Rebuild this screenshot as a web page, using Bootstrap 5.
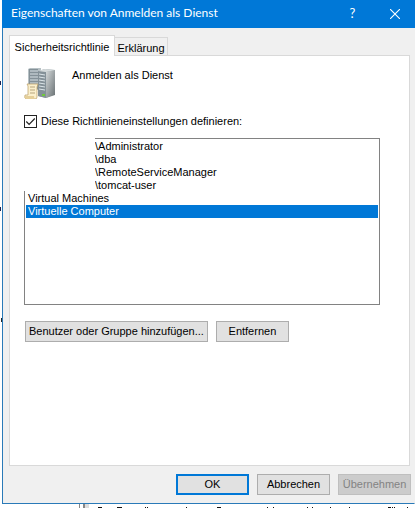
<!DOCTYPE html>
<html lang="de">
<head>
<meta charset="utf-8">
<meta name="viewport" content="width=device-width, initial-scale=1">
<title>Eigenschaften von Anmelden als Dienst</title>
<link href="https://cdn.jsdelivr.net/npm/bootstrap@5.3.0/dist/css/bootstrap.min.css" rel="stylesheet">
<style>
  body { font-family: "Liberation Sans", Arial, sans-serif; font-size: 11px; line-height: 13px; color: #000; background: #fff; }
  .desktop { height: 100vh; padding-left: 2px; padding-right: 1px; }
  .peek { position: absolute; left: 0; width: 1px; height: 4px; background: #1a2250; }
  .peek-a { top: 81px; } .peek-b { top: 207px; } .peek-c { top: 318px; left: 1px; background: #222; }
  .dialog { background: #f0f0f0; border: 1px solid #2a7ab8; border-top: 0; border-right-color: #f0f0f0; height: calc(100vh - 4px); }
  .titlebar { background: #0078d7; color: #fff; height: 28px; padding-left: 9px; font-family: Lato, "Open Sans", sans-serif; margin: 0 -1px; }
  .titlebar h1 { font-size: 12px; line-height: 26px; font-weight: 400; }
  .titlebar button { width: 45px; height: 26px; color: #fff; background: none; border: 0; font-size: 13px; }
  .titlebar button:last-child { width: 40px; }
  .tabs { padding: 7px 4px 0 6px; }
  .tabs .nav-link { border: 1px solid #d9d9d9; border-bottom: 0; border-left: 0; border-radius: 0; color: #000; background: #f0f0f0; width: 53px; padding: 3px 0 0; height: 18px; margin: 0; text-align: center; }
  .tabs .nav-link.active { background: #fff; border-left: 1px solid #d9d9d9; width: 106px; height: 21px; padding: 2px 0 0; margin-bottom: -1px; position: relative; color: #000; }
  .panel { background: #fff; border: 1px solid #d9d9d9; margin: 0 4px 0 6px; padding: 9px 29px 0 14px; }
  .check { width: 13px; height: 13px; border: 1px solid #222; border-radius: 0 !important; margin: 0; }
  .check:checked { background: #fff url("data:image/svg+xml,%3Csvg xmlns='http://www.w3.org/2000/svg' viewBox='0 0 11 11'%3E%3Cpath d='M1.3 5.5l2.8 2.8L9.8 2.5' fill='none' stroke='%23222' stroke-width='1.2'/%3E%3C/svg%3E") center/11px; border-color: #222; }
  .listbox { position: relative; border: 1px solid #828282; height: 167px; padding: 1px; margin-top: 10px; border-radius: 0; }
  .entry { border: 0; background: none; color: #000; text-align: left; padding: 0 2px; line-height: 13px; height: 13px; }
  .entry.member { padding-left: 69px; }
  .entry.chosen { background: #0078d7; color: #fff; }
  .blank { position: absolute; left: -1px; top: -1px; width: 71px; height: 53px; background: #fff; }
  .push { border: 1px solid #adadad; border-radius: 0; background: #e1e1e1; color: #000; font-size: 11px; line-height: 13px; height: 21px; min-width: 73px; padding: 0 3px; }
  .push.main { border: 2px solid #0078d7; }
  .push:disabled { background: #ccc; border-color: #bfbfbf; color: #838383; opacity: 1; }
  .edit-actions { padding-left: 1px; }
  .actions { padding: 8px 3px 8px 0; }
  .behind { height: 4px; padding-left: 76px; }
</style>
<script src="https://cdn.jsdelivr.net/npm/bootstrap@5.3.0/dist/js/bootstrap.bundle.min.js"></script>
</head>
<body>
<div class="desktop position-relative overflow-hidden">
  <span class="peek peek-a"></span><span class="peek peek-b"></span><span class="peek peek-c"></span>
  <main class="dialog d-flex flex-column">
    <header class="titlebar d-flex">
      <h1 class="m-0 flex-grow-1 text-nowrap">Eigenschaften von Anmelden als Dienst</h1>
      <button type="button" class="p-0" aria-label="Hilfe">?</button>
      <button type="button" class="p-0" aria-label="Schließen"><svg width="10" height="10" viewBox="0 0 10 10" stroke="#fff" stroke-width="1.1"><path d="M0 0l10 10M10 0L0 10"/></svg></button>
    </header>
    <nav class="tabs nav align-items-end" role="tablist">
      <button type="button" class="nav-link active" role="tab" aria-selected="true">Sicherheitsrichtlinie</button>
      <button type="button" class="nav-link" role="tab" aria-selected="false">Erklärung</button>
    </nav>
    <section class="panel flex-grow-1">
      <div class="d-flex">
        <svg width="32" height="34" viewBox="0 -3 32 34" aria-hidden="true">
          <defs><linearGradient id="side" x2="1" y2="1"><stop stop-color="#d4d9da"/><stop offset="1" stop-color="#687073"/></linearGradient></defs>
          <path d="M4 1l2-1h11v22H4z" fill="#b7c1c5"/><path d="M5 1h9v20H5z" fill="#849198"/>
          <path d="M6 3h8M6 6h8M6 9h8M6 12h8M6 15h8" stroke="#d9e2e6"/>
          <path d="M14 3l7-2 10 1v24l-9 4-8-2z" fill="#929ea3"/><path d="M22 4l9-2v25l-9 3z" fill="url(#side)"/>
          <path d="M14 3l8 1v26l-8-2z" fill="#849198"/><path d="M14 3l7-2 10 1-9 2z" fill="#d5dbdc"/>
          <path d="M15 6l6 1M15 9l6 1M15 12l6 1M15 15l6 1M15 18l6 1M15 21l6 1" stroke="#dce5e9"/><path d="M18 27h3" stroke="#70c83b" stroke-width="2"/>
          <path d="M3 16h11l-1 3v10q0 2-2 2H2q-2-1-1-4h3V18z" fill="#fbf0cd" stroke="#b89b61" stroke-width=".7"/>
          <path d="M1 28h9q0 3 2 3H2q-2-1-1-3" fill="#e5cf99"/><path d="M6 19h5M6 22h5M6 25h5" stroke="#b7a57e"/>
        </svg>
        <p class="m-0 ps-3 pt-1">Anmelden als Dienst</p>
      </div>
      <div class="d-flex align-items-center mt-3">
        <input class="form-check-input check" type="checkbox" id="define" checked>
        <label for="define" class="ps-1 text-nowrap">Diese Richtlinieneinstellungen definieren:</label>
      </div>
      <div class="listbox list-group" role="listbox" aria-label="Konten">
        <span class="blank"></span>
        <button type="button" role="option" class="entry member">\Administrator</button>
        <button type="button" role="option" class="entry member">\dba</button>
        <button type="button" role="option" class="entry member">\RemoteServiceManager</button>
        <button type="button" role="option" class="entry member">\tomcat-user</button>
        <button type="button" role="option" class="entry">Virtual Machines</button>
        <button type="button" role="option" class="entry chosen" aria-selected="true">Virtuelle Computer</button>
      </div>
      <div class="edit-actions d-flex gap-2 mt-3">
        <button type="button" class="btn push">Benutzer oder Gruppe hinzufügen...</button>
        <button type="button" class="btn push">Entfernen</button>
      </div>
    </section>
    <footer class="actions d-flex justify-content-end gap-2">
      <button type="button" class="btn push main">OK</button>
      <button type="button" class="btn push">Abbrechen</button>
      <button type="button" class="btn push" disabled>Übernehmen</button>
    </footer>
  </main>
  <div class="behind overflow-hidden"><svg class="d-block" width="337" height="4" viewBox="78 504 337 4" aria-hidden="true">
    <path d="M79.500 504v4" stroke="#888"/><path d="M84 504v4" stroke="#888" stroke-width="2"/><path d="M87 504v4" stroke="#ddd" stroke-width="4"/>
    <path d="M98 507.500h4M117 507.500h5M145 507.500h1M147 507.500h1M186 507.500h1M217 507.500h4M267 507.500h1M273 507.500h1M307 507.500h1M312 507.500h1M330 507.500h1M349 507.500h1M388 507.500h3M392 507.500h1M394 507.500h1M407 507.500h1" stroke="#111"/>
  </svg></div>
</div>
</body>
</html>
